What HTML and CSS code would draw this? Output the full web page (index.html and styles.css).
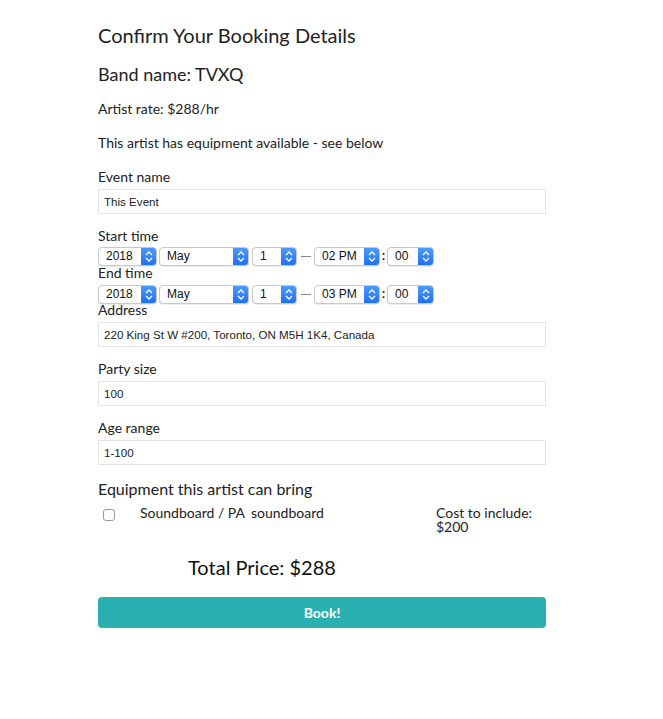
FILE: index.html
```html
<!DOCTYPE html>
<html>
<head>
<meta charset="utf-8">
<link rel="stylesheet" href="styles.css">
</head>
<body>
<div class="page">
  <h1 class="title">Confirm Your Booking Details</h1>
  <h2 class="band">Band name: TVXQ</h2>
  <p class="info">Artist rate: $288/hr</p>
  <p class="info">This artist has equipment available - see below</p>

  <label class="label">Event name</label>
  <div class="input">This Event</div>

  <label class="label tight first">Start time</label>
  <div class="dt-row">
    <div class="sel w-year"><span class="val">2018</span><span class="arrow"><svg viewBox="0 0 16 19" width="16" height="19"><path d="M5 8 L8 5 L11 8 M5 11 L8 14 L11 11" fill="none" stroke="#fff" stroke-width="1.3"/></svg></span></div>
    <div class="sel w-month"><span class="val">May</span><span class="arrow"><svg viewBox="0 0 16 19" width="16" height="19"><path d="M5 8 L8 5 L11 8 M5 11 L8 14 L11 11" fill="none" stroke="#fff" stroke-width="1.3"/></svg></span></div>
    <div class="sel w-day"><span class="val">1</span><span class="arrow"><svg viewBox="0 0 16 19" width="16" height="19"><path d="M5 8 L8 5 L11 8 M5 11 L8 14 L11 11" fill="none" stroke="#fff" stroke-width="1.3"/></svg></span></div>
    <span class="dash"></span>
    <div class="sel w-hour"><span class="val">02 PM</span><span class="arrow"><svg viewBox="0 0 16 19" width="16" height="19"><path d="M5 8 L8 5 L11 8 M5 11 L8 14 L11 11" fill="none" stroke="#fff" stroke-width="1.3"/></svg></span></div>
    <span class="colon">:</span>
    <div class="sel w-min"><span class="val">00</span><span class="arrow"><svg viewBox="0 0 16 19" width="16" height="19"><path d="M5 8 L8 5 L11 8 M5 11 L8 14 L11 11" fill="none" stroke="#fff" stroke-width="1.3"/></svg></span></div>
  </div>

  <label class="label tight">End time</label>
  <div class="dt-row second">
    <div class="sel w-year"><span class="val">2018</span><span class="arrow"><svg viewBox="0 0 16 19" width="16" height="19"><path d="M5 8 L8 5 L11 8 M5 11 L8 14 L11 11" fill="none" stroke="#fff" stroke-width="1.3"/></svg></span></div>
    <div class="sel w-month"><span class="val">May</span><span class="arrow"><svg viewBox="0 0 16 19" width="16" height="19"><path d="M5 8 L8 5 L11 8 M5 11 L8 14 L11 11" fill="none" stroke="#fff" stroke-width="1.3"/></svg></span></div>
    <div class="sel w-day"><span class="val">1</span><span class="arrow"><svg viewBox="0 0 16 19" width="16" height="19"><path d="M5 8 L8 5 L11 8 M5 11 L8 14 L11 11" fill="none" stroke="#fff" stroke-width="1.3"/></svg></span></div>
    <span class="dash"></span>
    <div class="sel w-hour"><span class="val">03 PM</span><span class="arrow"><svg viewBox="0 0 16 19" width="16" height="19"><path d="M5 8 L8 5 L11 8 M5 11 L8 14 L11 11" fill="none" stroke="#fff" stroke-width="1.3"/></svg></span></div>
    <span class="colon">:</span>
    <div class="sel w-min"><span class="val">00</span><span class="arrow"><svg viewBox="0 0 16 19" width="16" height="19"><path d="M5 8 L8 5 L11 8 M5 11 L8 14 L11 11" fill="none" stroke="#fff" stroke-width="1.3"/></svg></span></div>
  </div>

  <label class="label tight addr">Address</label>
  <div class="input after-tight">220 King St W #200, Toronto, ON M5H 1K4, Canada</div>

  <label class="label">Party size</label>
  <div class="input">100</div>

  <label class="label">Age range</label>
  <div class="input">1-100</div>

  <h3 class="equip-title">Equipment this artist can bring</h3>
  <div class="equip-row">
    <div class="cell-check"><span class="checkbox"></span></div>
    <div class="cell-name">Soundboard / PA</div>
    <div class="cell-type">soundboard</div>
    <div class="cell-cost"><div>Cost to include:</div><div>$200</div></div>
  </div>

  <div class="total">Total Price: $288</div>

  <button class="book">Book!</button>
</div>
</body>
</html>
```

FILE: styles.css
```css
* { box-sizing: border-box; }
body {
  margin: 0;
  background: #fff;
  color: #222;
  font-family: Lato, "Open Sans", sans-serif;
}
.page {
  width: 448px;
  margin-left: 98px;
  padding-top: 23px;
}
.title {
  margin: 0;
  font-size: 20px;
  line-height: 24px;
  font-weight: 400;
}
.band {
  margin: 16px 0 0;
  font-size: 18px;
  line-height: 22px;
  font-weight: 400;
}
.info {
  margin: 14px 0 0;
  font-size: 14px;
  line-height: 20px;
}
.label {
  display: block;
  margin-top: 14px;
  font-size: 14px;
  line-height: 20px;
}
.label.tight {
  line-height: 14px;
  margin-top: 0;
}
.label.tight.first {
  margin-top: 15px;
}
.label.tight.addr {
  margin-top: -1px;
}
.input {
  margin-top: 2px;
  height: 25px;
  border: 1px solid #e3e3e3;
  padding: 0 5px;
  font-family: "Liberation Sans", Arial, sans-serif;
  font-size: 11.6px;
  line-height: 23px;
  color: #222;
}
.input + .label { margin-top: 12px; }
.input.after-tight { margin-top: 5px; }
.dt-row {
  display: flex;
  align-items: center;
  height: 20px;
  margin-top: 3px;
}
.dt-row.second {
  margin-top: 4px;
}
.sel {
  display: flex;
  height: 19px;
  border: 1px solid #c8c8c8;
  border-radius: 4px;
  background: #fff;
  overflow: hidden;
  margin-right: 2px;
  box-shadow: 0 0.5px 0.5px rgba(0,0,0,0.15);
}
.sel .val {
  flex: 1;
  padding-left: 7px;
  font-family: "Liberation Sans", Arial, sans-serif;
  font-size: 12px;
  line-height: 17px;
  color: #111;
}
.sel .arrow {
  width: 16px;
  height: 19px;
  margin-top: -1px;
  margin-right: -1px;
  background: linear-gradient(#4e9cfb, #1c6ff0);
  display: flex;
}
.w-year { width: 59px; }
.w-month { width: 90px; }
.w-day { width: 45px; margin-left: 1px; }
.w-hour { width: 66px; }
.w-min { width: 47px; }
.dash {
  width: 10px;
  height: 1px;
  background: #888;
  margin: 0 3px 0 2px;
}
.colon {
  width: 9px;
  text-align: center;
  font-family: "Liberation Sans", Arial, sans-serif;
  font-size: 12px;
  font-weight: 700;
  color: #222;
  margin-right: -1px;
  margin-left: -3px;
}
.equip-title {
  margin: 14px 0 0;
  font-size: 16px;
  line-height: 20px;
  font-weight: 400;
}
.equip-row {
  display: flex;
  margin-top: 7px;
  font-size: 14px;
  line-height: 14px;
}
.cell-check {
  width: 42px;
  padding-left: 5px;
  padding-top: 3px;
}
.checkbox {
  display: block;
  width: 12px;
  height: 12px;
  border: 1px solid #9a9a9a;
  border-radius: 3px;
  background: #fff;
}
.cell-name {
  width: 111px;
}
.cell-type {
  width: 185px;
}
.cell-cost {
  width: 110px;
}
.total {
  margin: 21px 0 0 90px;
  font-size: 20px;
  line-height: 24px;
  color: #111;
}
.book {
  display: block;
  width: 100%;
  height: 31px;
  margin-top: 18px;
  border: none;
  border-radius: 4px;
  background: #2ab0b0;
  color: #fff;
  font-family: Lato, sans-serif;
  font-weight: 700;
  font-size: 14px;
}
```
